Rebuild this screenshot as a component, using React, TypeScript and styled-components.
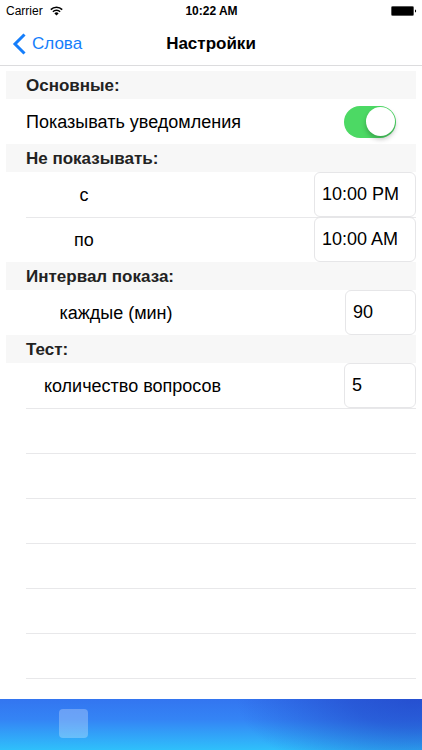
import React, { useState } from "react";
import styled, { createGlobalStyle } from "styled-components";

const GlobalStyle = createGlobalStyle`
  * { box-sizing: border-box; }
  body { margin: 0; background: #fff; }
  body, button, input { font-family: "Liberation Sans", Arial, sans-serif; }
`;

const Page = styled.div`
  display: flex;
  flex-direction: column;
  min-height: 100vh;
  color: #000;
`;

const Header = styled.header`
  border-bottom: 1px solid #dcdcde;
`;

const StatusBar = styled.div`
  display: grid;
  grid-template-columns: 1fr auto 1fr;
  align-items: center;
  height: 22px;
  padding: 0 5px 0 6px;
  font-size: 12px;
  line-height: 22px;
`;

const Carrier = styled.span`
  display: flex;
  align-items: center;
  gap: 7px;
`;

const Clock = styled.span`
  font-weight: 700;
`;

const Battery = styled.svg`
  justify-self: end;
`;

const NavBar = styled.nav`
  display: grid;
  grid-template-columns: 1fr auto 1fr;
  align-items: center;
  height: 43px;
  padding: 0 12px;
`;

const BackLink = styled.a`
  display: flex;
  align-items: center;
  gap: 6px;
  color: #157efb;
  font-size: 17px;
  text-decoration: none;
`;

const Title = styled.h1`
  margin: 0;
  font-size: 17px;
  line-height: 24px;
`;

const Settings = styled.main`
  flex: 1;
  padding: 5px 6px 0;
`;

const SectionTitle = styled.h2`
  margin: 0;
  height: 28px;
  padding-left: 20px;
  background: #f7f7f7;
  color: #222;
  font-size: 17px;
  line-height: 30px;
`;

const Row = styled.div<{ $divided?: boolean }>`
  display: flex;
  align-items: center;
  justify-content: space-between;
  height: 45px;
  margin-left: 20px;
  box-shadow: ${(p) => (p.$divided ? "inset 0 1px #e8e8ea" : "none")};
`;

const LastRow = styled(Row)`
  height: 21px;
`;

const Label = styled.label<{ $width?: number }>`
  width: ${(p) => (p.$width ? `${p.$width}px` : "auto")};
  text-align: ${(p) => (p.$width ? "center" : "left")};
  font-size: 18px;
  line-height: 24px;
  white-space: nowrap;
`;

const Field = styled.input<{ $width: number }>`
  width: ${(p) => p.$width}px;
  height: 45px;
  padding: 0 7px;
  border: 1px solid #e6e6e8;
  border-radius: 6px;
  background: #fff;
  color: #000;
  font-size: 18px;
  outline: none;
`;

const Switch = styled.input`
  appearance: none;
  display: flex;
  align-items: center;
  width: 52px;
  height: 32px;
  margin: 0 20px 0 0;
  padding: 0 1px;
  border-radius: 16px;
  background: #e5e5e5;
  cursor: pointer;

  &::before {
    content: "";
    width: 29px;
    height: 29px;
    border-radius: 50%;
    background: #fff;
    box-shadow: 0 3px 5px rgba(0, 0, 0, 0.25);
  }

  &:checked {
    justify-content: flex-end;
    background: #4cd964;
  }
`;

const AdBanner = styled.footer`
  height: 51px;
  padding: 10px 59px;
  background:
    radial-gradient(ellipse 42% 160% at 98% 0, rgba(32, 64, 195, 0.7), rgba(32, 64, 195, 0.55) 35%, rgba(32, 64, 195, 0)),
    linear-gradient(#3375f0, #3484f5 40%, #2fc0fb);
`;

const AdIcon = styled.div`
  width: 29px;
  height: 29px;
  border-radius: 4px;
  background: rgba(255, 255, 255, 0.27);
`;

const EMPTY_ROWS = [1, 2, 3, 4, 5, 6];

export default function App() {
  const [notify, setNotify] = useState(true);

  return (
    <Page>
      <GlobalStyle />
      <Header>
        <StatusBar>
          <Carrier>
            Carrier
            <svg width="13" height="10" viewBox="0 0 13 10" fill="none" stroke="#000" strokeWidth="1.6" aria-hidden="true">
              <path d="M.8 3.6a8.1 8.1 0 0 1 11.4 0M2.9 5.8a5.1 5.1 0 0 1 7.2 0" />
              <path d="M6.5 9.5 4.4 7.4a3 3 0 0 1 4.2 0z" fill="#000" stroke="none" />
            </svg>
          </Carrier>
          <Clock>10:22 AM</Clock>
          <Battery width="26" height="11" viewBox="0 0 26 11" aria-hidden="true">
            <rect x=".5" y=".5" width="22" height="9" rx="1" stroke="#555" />
            <path d="M24 3.4c1.5.4 1.5 2.8 0 3.2z" />
          </Battery>
        </StatusBar>
        <NavBar>
          <BackLink href="#words">
            <svg width="14" height="22" viewBox="0 0 14 22" fill="none" stroke="#157efb" strokeWidth="3" aria-hidden="true">
              <path d="M12.5 1.5 3 11l9.5 9.5" />
            </svg>
            Слова
          </BackLink>
          <Title>Настройки</Title>
        </NavBar>
      </Header>
      <Settings>
        <SectionTitle>Основные:</SectionTitle>
        <Row>
          <Label htmlFor="notify">Показывать уведомления</Label>
          <Switch id="notify" type="checkbox" role="switch" checked={notify} onChange={() => setNotify(!notify)} />
        </Row>
        <SectionTitle>Не показывать:</SectionTitle>
        <Row>
          <Label htmlFor="from" $width={116}>с</Label>
          <Field id="from" $width={102} defaultValue="10:00 PM" />
        </Row>
        <Row $divided>
          <Label htmlFor="to" $width={116}>по</Label>
          <Field id="to" $width={102} defaultValue="10:00 AM" />
        </Row>
        <SectionTitle>Интервал показа:</SectionTitle>
        <Row>
          <Label htmlFor="interval" $width={180}>каждые (мин)</Label>
          <Field id="interval" $width={71} inputMode="numeric" defaultValue="90" />
        </Row>
        <SectionTitle>Тест:</SectionTitle>
        <Row>
          <Label htmlFor="questions" $width={213}>количество вопросов</Label>
          <Field id="questions" $width={72} inputMode="numeric" defaultValue="5" />
        </Row>
        {EMPTY_ROWS.map((n) => (
          <Row key={n} $divided />
        ))}
        <LastRow $divided />
      </Settings>
      <AdBanner>
        <AdIcon />
      </AdBanner>
    </Page>
  );
}
